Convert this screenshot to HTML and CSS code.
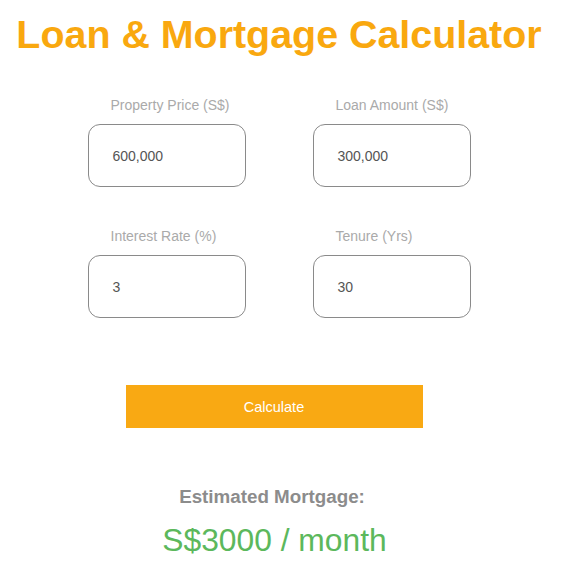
FILE: index.html
```html
<!DOCTYPE html>
<html>
<head>
<meta charset="utf-8">
<link rel="stylesheet" href="styles.css">
</head>
<body>
<div class="page">
  <h1 class="title">Loan &amp; Mortgage Calculator</h1>
  <div class="grid">
    <div class="field">
      <label class="label">Property Price (S$)</label>
      <div class="input">600,000</div>
    </div>
    <div class="field">
      <label class="label">Loan Amount (S$)</label>
      <div class="input">300,000</div>
    </div>
    <div class="field">
      <label class="label">Interest Rate (%)</label>
      <div class="input">3</div>
    </div>
    <div class="field">
      <label class="label">Tenure (Yrs)</label>
      <div class="input">30</div>
    </div>
  </div>
  <div class="btn-row"><button class="btn">Calculate</button></div>
  <div class="result">
    <div class="result-label">Estimated Mortgage:</div>
    <div class="result-value">S$3000 / month</div>
  </div>
</div>
</body>
</html>
```
FILE: styles.css
```css
* { box-sizing: border-box; }
body {
  margin: 0;
  background: #fff;
  font-family: "Liberation Sans", Arial, sans-serif;
}
.page {
  width: 558px;
  display: flex;
  flex-direction: column;
  align-items: center;
}
.title {
  margin: 11px 0 0;
  font-size: 39.4px;
  font-weight: bold;
  color: #f9a80f;
  line-height: 46px;
  white-space: nowrap;
}
.grid {
  margin-top: 39px;
  display: grid;
  grid-template-columns: 157px 157px;
  column-gap: 68px;
  row-gap: 40px;
  margin-right: 1px;
}
.field {
  display: flex;
  flex-direction: column;
  align-items: flex-start;
}
.label {
  font-size: 14px;
  color: #aaa;
  line-height: 18px;
  margin-bottom: 10px;
  padding-left: 23px;
}
.input {
  width: 158px;
  height: 63px;
  border: 1px solid #8a8a8a;
  border-radius: 12px;
  padding-left: 24px;
  display: flex;
  align-items: center;
  font-size: 14px;
  color: #555;
}
.btn-row {
  margin-top: 67px;
  display: flex;
  justify-content: center;
  width: 100%;
  padding-right: 10px;
}
.btn {
  width: 297px;
  height: 43px;
  border: none;
  background: #f9a913;
  color: #fff;
  font-family: "Liberation Sans", Arial, sans-serif;
  font-size: 14.5px;
}
.result {
  margin-top: 58px;
  display: flex;
  flex-direction: column;
  align-items: center;
  width: 100%;
}
.result-label {
  font-size: 18.8px;
  font-weight: bold;
  color: #8c8c8c;
  line-height: 22px;
  margin-right: 14px;
}
.result-value {
  margin-top: 14px;
  font-size: 31.8px;
  color: #5cb85c;
  line-height: 36px;
  margin-right: 9px;
}
```
